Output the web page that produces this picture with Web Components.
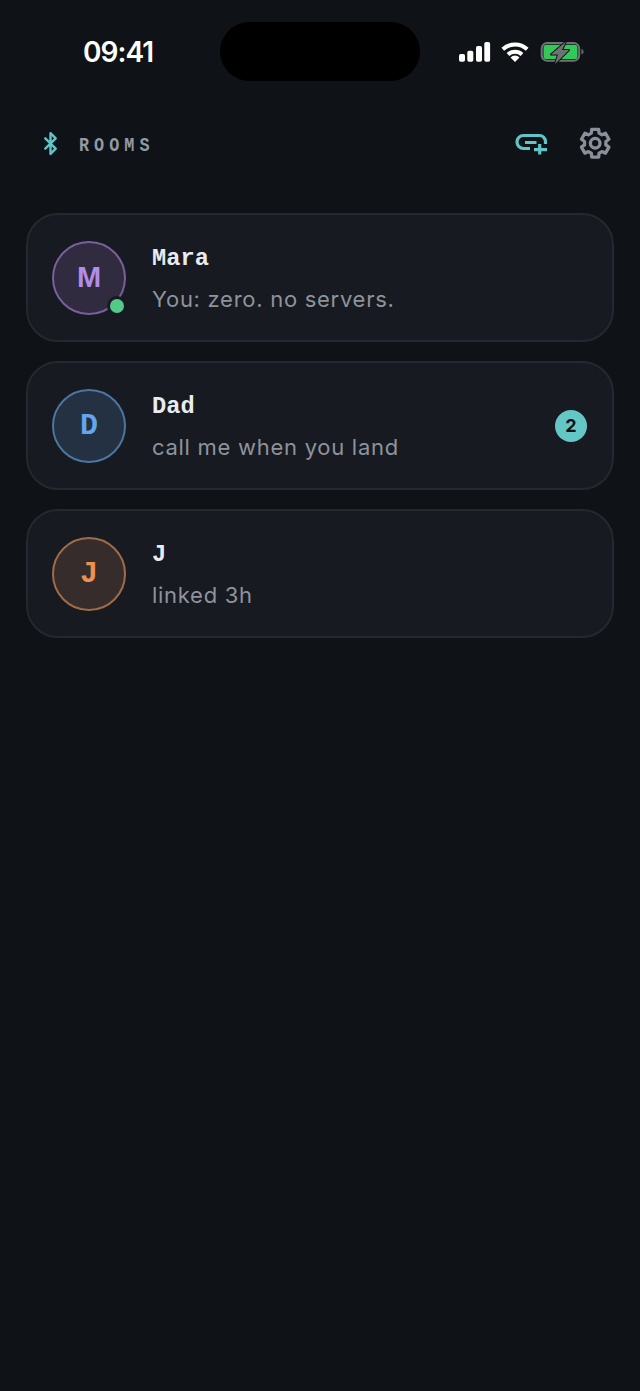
<!DOCTYPE html>
<html><head><meta charset="utf-8"><style>
html,body{margin:0;padding:0;background:#0f1216;}
body{width:640px;height:1391px;overflow:hidden;font-family:Inter,"Liberation Sans",sans-serif;}
</style></head><body>
<app-screen>
<status-bar></status-bar>
<rooms-header></rooms-header>
<room-list>
<room-card name="Mara" sub="You: zero. no servers." initial="M" fg="#b08ee8" bg="#312b3f" line="#77609c" online wide></room-card>
<room-card name="Dad" sub="call me when you land" initial="D" fg="#64a5ee" bg="#233142" line="#4a769f" badge="2"></room-card>
<room-card name="J" sub="linked 3h" initial="J" fg="#ec9152" bg="#352c2b" line="#a06c47"></room-card>
</room-list>
</app-screen>
<script>
function def(name,html,init){customElements.define(name,class extends HTMLElement{constructor(){super();this.attachShadow({mode:'open'}).innerHTML=html;}connectedCallback(){if(init)init(this,this.shadowRoot);}});}
function gear(cx,cy){let d='';for(let k=0;k<6;k++){const c=-90+60*k;[[10.8,-21],[14.3,-14],[14.3,14],[10.8,21]].forEach(([r,o],i)=>{const t=(c+o)*Math.PI/180;d+=(k==0&&i==0?'M':'L')+(cx+r*Math.cos(t)).toFixed(2)+' '+(cy+r*Math.sin(t)).toFixed(2)+' ';});}return d+'Z';}
def('app-screen',`<style>:host{display:flex;flex-direction:column;width:640px;height:1391px;background:#0f1216;color:#fff}</style><slot></slot>`);
def('status-bar',`<style>
:host{display:grid;grid-template-columns:220px 200px 220px;height:59px;padding-top:22px}
.t{font:600 28px/1 Inter,"Liberation Sans",sans-serif;color:#fff;padding:16px 0 0 83px;letter-spacing:-.95px;white-space:nowrap}
.i{background:#000;border-radius:30px}
.r{padding:18px 0 0 39px}
svg{display:block}
</style>
<div class="t">09:41</div><div class="i"></div>
<div class="r"><svg width="125" height="24" viewBox="459 40 125 24">
<g fill="#fff"><rect x="459" y="54" width="6" height="7.700" rx="1.800"/><rect x="467.300" y="50.700" width="6" height="11" rx="1.800"/><rect x="476" y="46" width="6" height="15.700" rx="1.800"/><rect x="484.300" y="42" width="5.800" height="19.700" rx="1.800"/></g>
<g fill="none" stroke="#fff" stroke-width="4"><path d="M502.800 49.200A18 18 0 0 1 527.200 49.200"/><path d="M508 54.400A10.500 10.500 0 0 1 522 54.400"/></g>
<path d="M510.500 57.400A6.500 6.500 0 0 1 519.500 57.400L515 62z" fill="#fff"/>
<rect x="541.700" y="43" width="37.500" height="17.700" rx="5.500" fill="none" stroke="#6f7276" stroke-width="2"/>
<rect x="543.500" y="44.800" width="34" height="14.300" rx="3.200" fill="#34c759"/>
<path d="M581.300 49v5.300c1.500-.3 2.400-1.400 2.400-2.650s-.9-2.350-2.400-2.650z" fill="#5d6064"/>
<path d="M566 41.500 551 54.500h7L555 64 569 50h-7z" fill="#6f7175" stroke="#0f1216" stroke-width="2" paint-order="stroke" stroke-linejoin="round"/>
</svg></div>`);
def('rooms-header',`<style>
:host{display:flex;align-items:center;height:44px;margin-top:40px;padding:0 25.5px 0 38px}
.w{margin-left:16px;flex:1;padding-top:5px;min-width:0}
.l{display:block;font:700 21px/1 "Liberation Mono",monospace;letter-spacing:6.300px;color:#9299a5;transform:scaleX(.8);transform-origin:left center;white-space:nowrap}
svg{display:block;flex:none}
.g{margin-left:24px}
</style>
<svg width="25" height="25" viewBox="0 0 24 24" fill="none" stroke="#62c4c6" stroke-width="2.300" stroke-linecap="round" stroke-linejoin="round"><path d="m7 7 10 10-5 5V2l5 5L7 17"/></svg>
<div class="w"><span class="l">ROOMS</span></div>
<svg width="40" height="32" viewBox="513 128 40 32" fill="none" stroke="#62c4c6" stroke-width="3.200"><path d="M531 149.500h-6.500a6.500 6.500 0 0 1 0-13h16a6 6 0 0 1 6 6V145"/><path d="M526 143.500h11.500M540.700 145V155.500M535 150.700h13"/></svg>
<svg class="g" width="38.400" height="38.400" viewBox="0 0 38.400 38.400" fill="none" stroke="#8a8f99" stroke-width="3.300" stroke-linejoin="round"><path d="${gear(19.2,19.2)}"/><circle cx="19.200" cy="19.200" r="4.800"/></svg>`);
def('room-list',`<style>:host{display:flex;flex-direction:column;gap:19px;padding:0 26px;margin-top:48px}</style><slot></slot>`);
def('room-card',`<style>
:host{display:flex;align-items:center;height:129px;box-sizing:border-box;border:2px solid #25282e;border-radius:32px;background:#171a21;padding:0 25px 0 24px;gap:26px}
.a{position:relative;flex:none;width:74px;height:74px;box-sizing:border-box;border-radius:50%;border:2px solid;display:flex;align-items:center;justify-content:center;font:700 30px/1 "Liberation Mono",monospace}
:host([wide]) .a{font:700 29px/1 "Liberation Sans",sans-serif}
.d{position:absolute;right:-3px;bottom:-3px;width:14px;height:14px;border-radius:50%;background:#55c98a;border:3px solid #171a21}
.m{flex:1;min-width:0;display:flex;flex-direction:column;gap:14px;padding-top:1px}
.n{font:700 23.700px/26px "Liberation Mono",monospace;color:#e9ebef;padding-top:2px}
.s{font:400 22px/27px Inter,"Liberation Sans",sans-serif;letter-spacing:.72px;color:#8e939c}
.b{flex:none;width:32px;height:32px;border-radius:50%;background:#65c6c6;color:#0f1216;font:700 18px/32px Inter,sans-serif;text-align:center}
</style><div class="a"><span class="i"></span></div><div class="m"><div class="n"></div><div class="s"></div></div>`,
(h,r)=>{const g=k=>h.getAttribute(k);const a=r.querySelector('.a');a.style.cssText=`color:${g('fg')};background:${g('bg')};border-color:${g('line')}`;r.querySelector('.i').textContent=g('initial');r.querySelector('.n').textContent=g('name');r.querySelector('.s').textContent=g('sub');
if(h.hasAttribute('online')){const d=document.createElement('div');d.className='d';a.append(d)}
if(g('badge')){const b=document.createElement('div');b.className='b';b.textContent=g('badge');r.append(b)}});
</script>
</body></html>
